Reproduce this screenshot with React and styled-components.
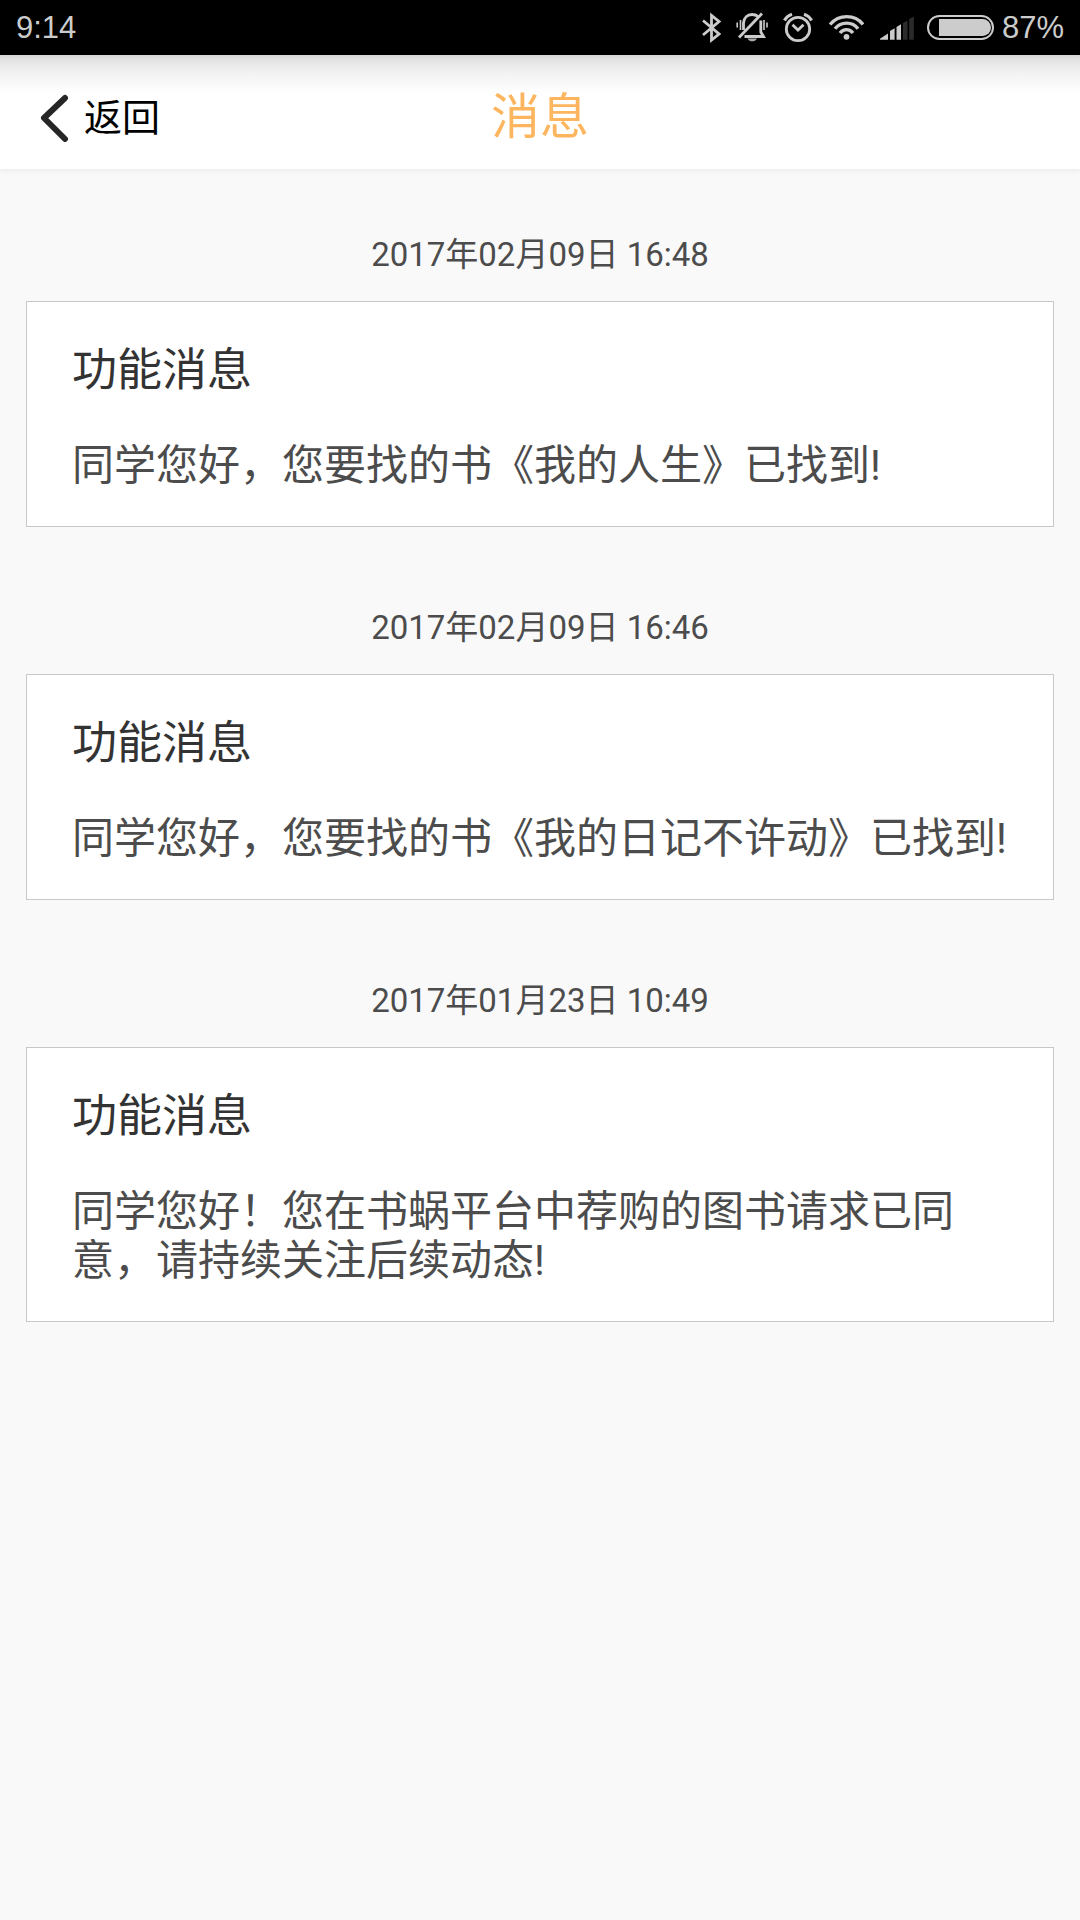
import React from "react";
import styled, { createGlobalStyle } from "styled-components";

const GlobalStyle = createGlobalStyle`
  * {
    box-sizing: border-box;
  }
  body {
    margin: 0;
    background: #f9f9f9;
    font-family: Roboto, "Noto Sans CJK SC", sans-serif;
  }
`;

const StatusBar = styled.div`
  display: flex;
  align-items: center;
  justify-content: space-between;
  height: 55px;
  padding: 0 16px;
  background: #000;
  color: #cccccc;
  font-family: "Liberation Sans", sans-serif;
  font-size: 31px;
  line-height: 37px;
`;

const StatusGroup = styled.div`
  display: flex;
  align-items: center;
  gap: ${(props) => (props.$wide ? "15px" : "8px")};
`;

const StatusIcon = styled.svg`
  display: block;
  flex: none;
  height: 31px;
  fill: none;
  stroke: #cccccc;
  stroke-width: ${(props) => (props.$bold ? "3.4" : "2.8")};
`;

const Header = styled.header`
  display: grid;
  grid-template-columns: 1fr auto 1fr;
  align-items: center;
  height: 114px;
  padding: 12px 40px 0;
  background: linear-gradient(
    #d6d6d6 0,
    #e2e2e2 4px,
    #f2f2f2 18px,
    #ffffff 38px
  );
  box-shadow: 0 1px 6px rgba(0, 0, 0, 0.08);
`;

const BackButton = styled.button`
  display: flex;
  align-items: center;
  justify-self: start;
  gap: 15px;
  padding: 0;
  border: none;
  background: none;
  color: #000;
  font-family: inherit;
  font-size: 38px;
  line-height: 48px;
  cursor: pointer;
`;

const Chevron = styled.svg`
  display: block;
  fill: none;
  stroke: #262626;
  stroke-width: 6;
  stroke-linecap: round;
  stroke-linejoin: round;
`;

const PageTitle = styled.h1`
  margin: 0;
  color: #fdb65f;
  font-size: 49px;
  font-weight: 400;
  line-height: 60px;
`;

const MessageList = styled.main`
  display: flex;
  flex-direction: column;
  gap: 81px;
  padding: 66px 26px;
`;

const Message = styled.article`
  display: flex;
  flex-direction: column;
  gap: 26px;
`;

const MessageTime = styled.time`
  color: #4c4c4c;
  font-size: 33px;
  line-height: 40px;
  text-align: center;
`;

const Card = styled.section`
  padding: 42px 45px 36px;
  border: 1px solid #c8c8c8;
  background: #fff;
`;

const CardTitle = styled.h2`
  margin: 0 0 44px;
  color: #333333;
  font-size: 45px;
  font-weight: 400;
  line-height: 53px;
`;

const CardText = styled.p`
  margin: 0;
  color: #4c4c4c;
  font-size: 42px;
  line-height: 49px;
`;

const messages = [
  {
    time: "2017年02月09日 16:48",
    dateTime: "2017-02-09T16:48",
    title: "功能消息",
    text: "同学您好，您要找的书《我的人生》已找到!",
  },
  {
    time: "2017年02月09日 16:46",
    dateTime: "2017-02-09T16:46",
    title: "功能消息",
    text: "同学您好，您要找的书《我的日记不许动》已找到!",
  },
  {
    time: "2017年01月23日 10:49",
    dateTime: "2017-01-23T10:49",
    title: "功能消息",
    text: "同学您好！您在书蜗平台中荐购的图书请求已同意，请持续关注后续动态!",
  },
];

function Bluetooth() {
  return (
    <StatusIcon width="19" viewBox="0 0 19 31">
      <path d="M1 8.5L17 22L9.5 28V3.5L17 9.5L1 23" />
    </StatusIcon>
  );
}

function BellOff() {
  return (
    <StatusIcon width="32" viewBox="0 0 32 31">
      <path d="M7.5 18V11C8 5.5 11.5 2.5 16 2.5C18.5 2.5 20.5 3.2 22 4.5" />
      <path d="M24.8 8.5V20L27.5 24.5H8.5" />
      <path d="M26 1.5L3 25.5" />
      <path d="M1.2 10.5V15.5M4.5 8V18M28 8V18M31 10.5V15.5" strokeWidth="1.6" />
      <path d="M11.5 26.5H21C20 28.5 18 29.3 16.2 29.3S12.5 28.5 11.5 26.5Z" fill="#aaaaaa" stroke="none" />
    </StatusIcon>
  );
}

function Alarm() {
  return (
    <StatusIcon width="30" viewBox="0 0 30 31">
      <circle cx="15" cy="17" r="11.7" />
      <path d="M9.5 12.8L15 18L20.5 12.8" />
      <path d="M1.5 8.5C3 5.5 5.5 3.3 9 2.2M28.5 8.5C27 5.5 24.5 3.3 21 2.2" strokeWidth="3.2" />
    </StatusIcon>
  );
}

function Wifi() {
  return (
    <StatusIcon $bold width="36" viewBox="0 0 36 31">
      <path d="M2 12.5C11 2 27 2 35 12.5" />
      <path d="M7 16.8C13 9.2 24.5 9.2 30 16.8" />
      <path d="M12 21C15.5 16.5 21.5 16.5 25 21" />
      <circle cx="18.5" cy="24.8" r="2.9" fill="#cccccc" stroke="none" />
    </StatusIcon>
  );
}

function Signal() {
  return (
    <StatusIcon width="35" viewBox="0 0 35 31">
      <g fill="#cccccc" stroke="none">
        <path d="M1 27.8V26.8L9 21.5V27.8Z" />
        <path d="M11 27.8V19L15.6 16.3V27.8Z" />
        <path d="M17.5 27.8V15L22 12.3V27.8Z" />
      </g>
      <g fill="#2b2b2b" stroke="none">
        <path d="M24 27.8V11L28.5 8.5V27.8Z" />
        <path d="M30.2 27.8V7L34.8 4.5V27.8Z" />
      </g>
    </StatusIcon>
  );
}

function Battery() {
  return (
    <StatusIcon width="72" viewBox="0 0 72 31">
      <rect x="6" y="4" width="65" height="23" rx="11.5" strokeWidth="2" />
      <path d="M17 7H60.5A8.5 8.5 0 0 1 60.5 24H17Z" fill="#cccccc" stroke="none" />
    </StatusIcon>
  );
}

function App() {
  return (
    <>
      <GlobalStyle />
      <StatusBar>
        <span>9:14</span>
        <StatusGroup>
          <StatusGroup $wide>
            <Bluetooth />
            <BellOff />
            <Alarm />
            <Wifi />
            <Signal />
          </StatusGroup>
          <Battery />
          <span>87%</span>
        </StatusGroup>
      </StatusBar>
      <Header>
        <BackButton type="button">
          <Chevron width="29" height="48" viewBox="0 0 29 48">
            <path d="M25 4L4 24L25 45" />
          </Chevron>
          返回
        </BackButton>
        <PageTitle>消息</PageTitle>
      </Header>
      <MessageList>
        {messages.map((message) => (
          <Message key={message.dateTime}>
            <MessageTime dateTime={message.dateTime}>{message.time}</MessageTime>
            <Card>
              <CardTitle>{message.title}</CardTitle>
              <CardText>{message.text}</CardText>
            </Card>
          </Message>
        ))}
      </MessageList>
    </>
  );
}

export default App;
